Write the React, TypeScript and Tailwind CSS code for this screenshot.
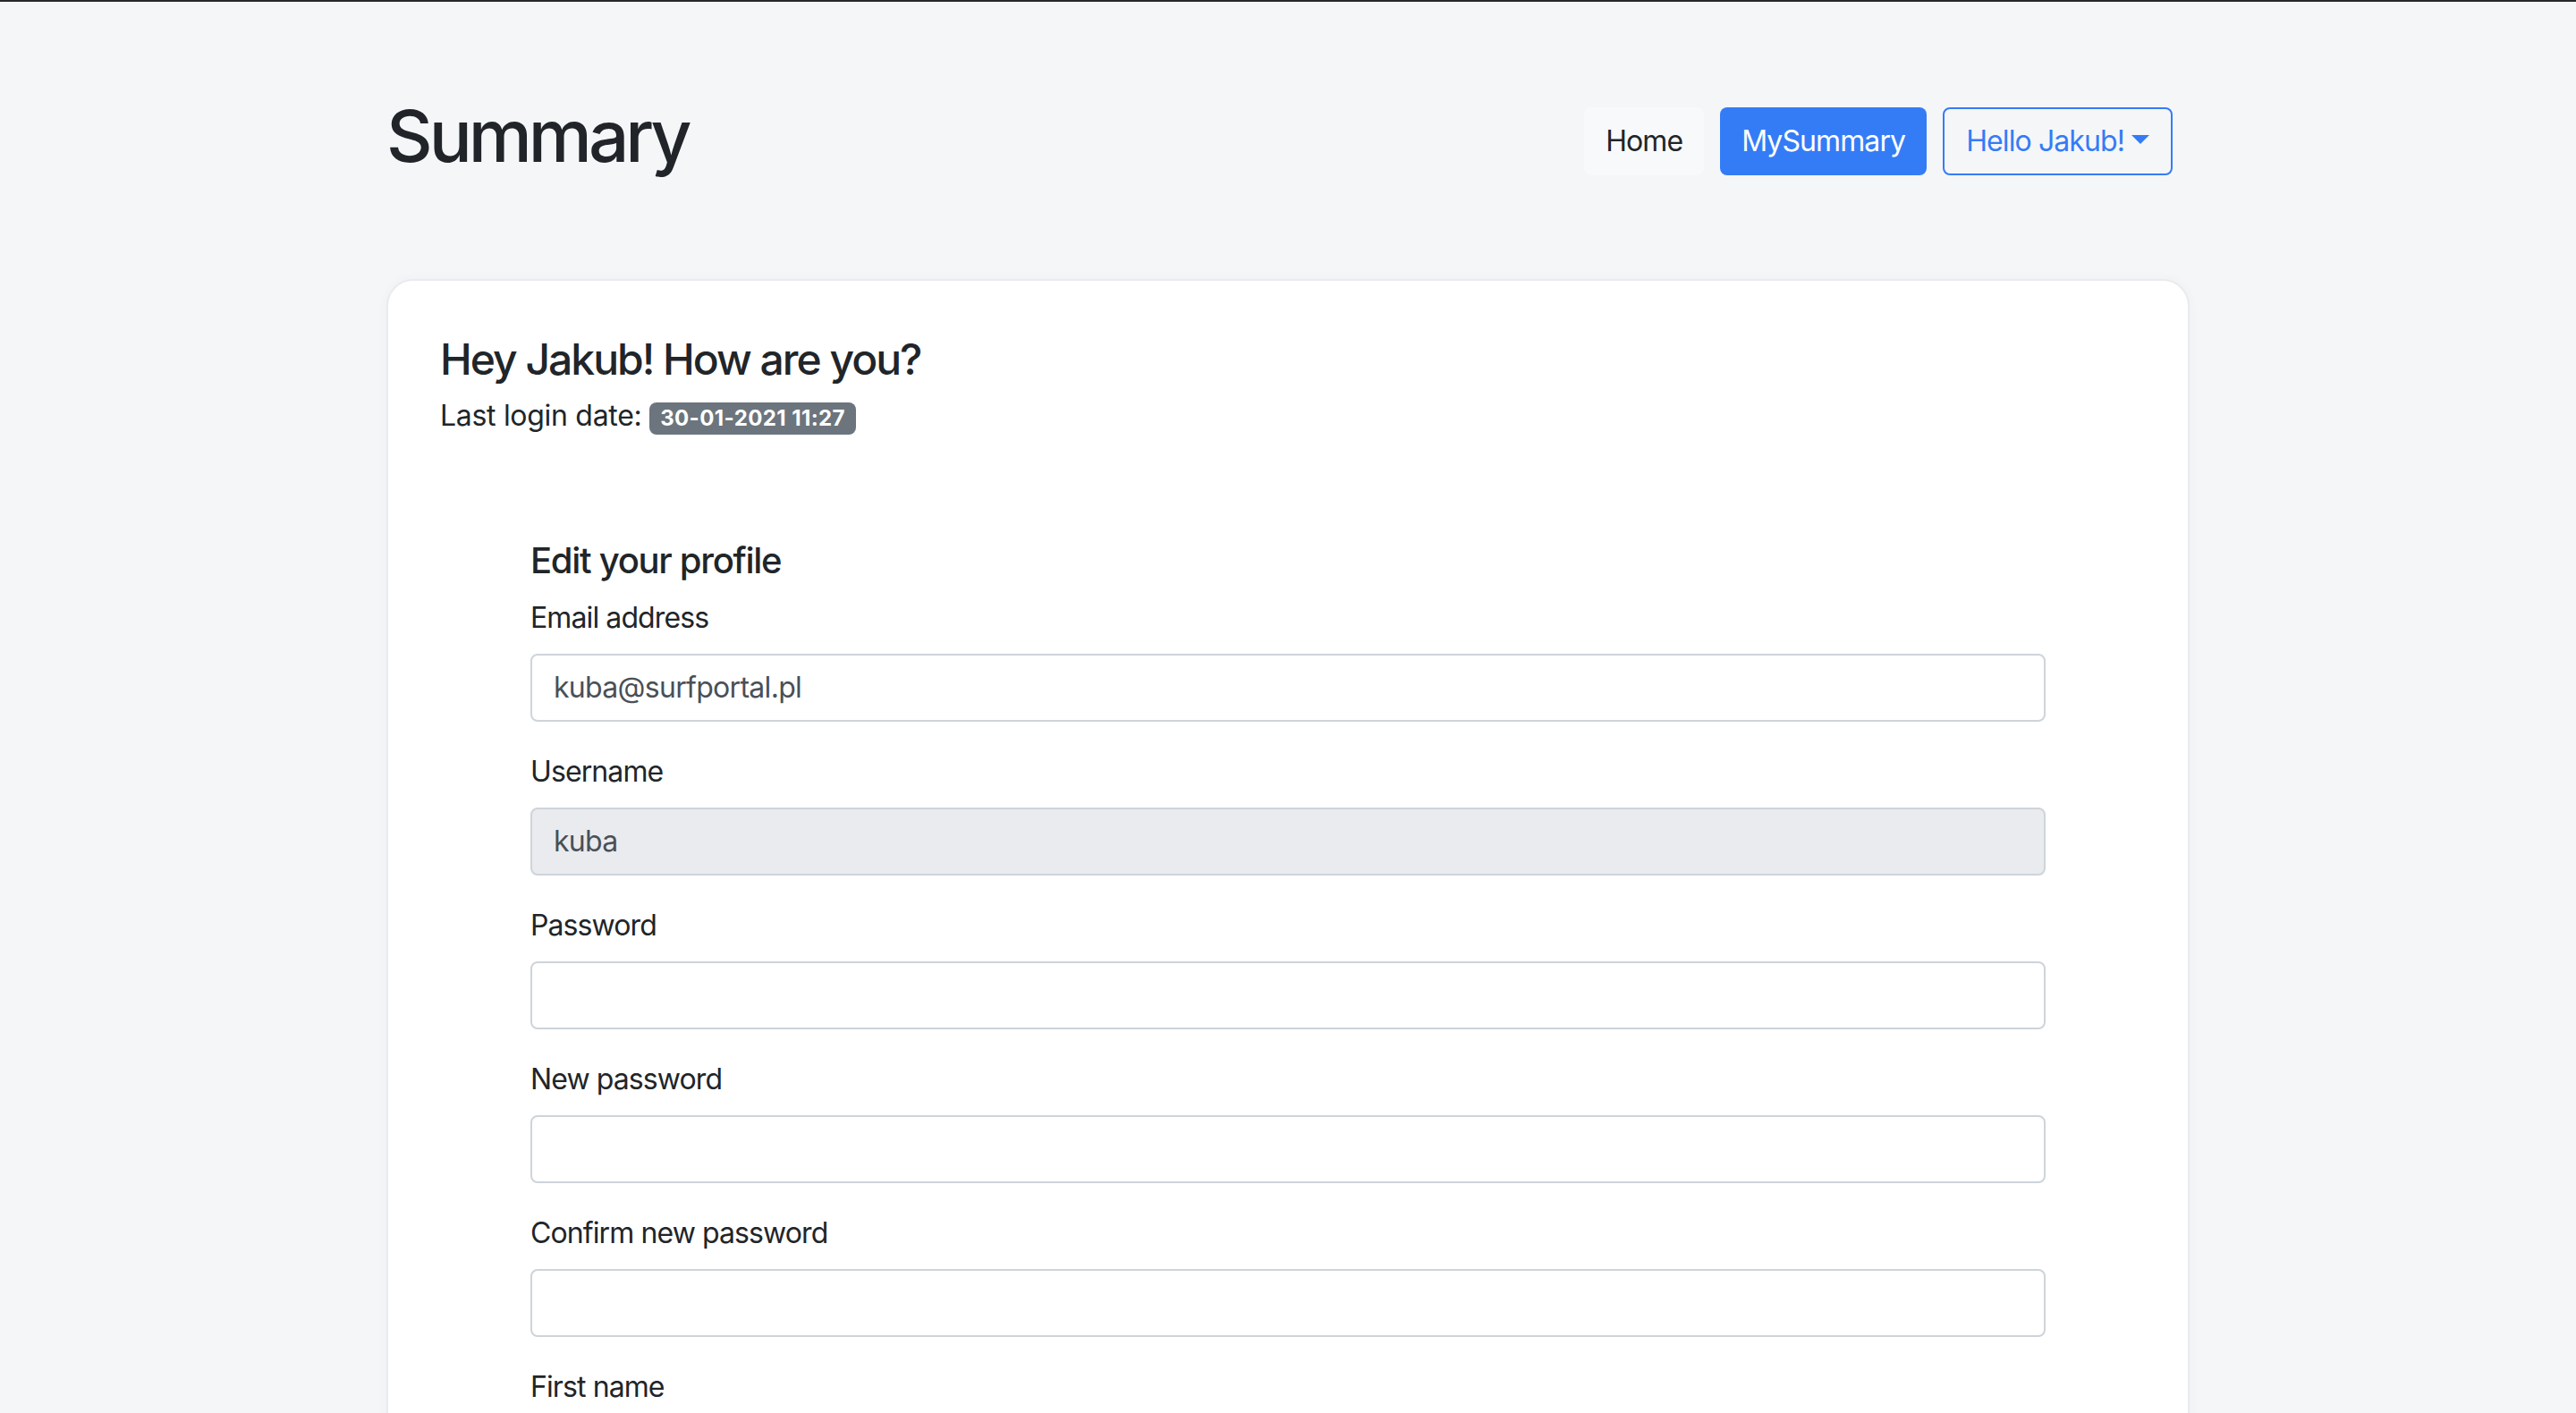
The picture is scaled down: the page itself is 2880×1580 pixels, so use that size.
import React from "react";

const font = { fontFamily: "Inter, 'Noto Sans', 'Liberation Sans', sans-serif" };

function Field({ label, value, disabled }: { label: string; value?: string; disabled?: boolean }) {
  return (
    <div className="mb-[32px]">
      <label className="block text-[32px] leading-[48px] mb-[16px] text-[#212529] tracking-[-0.9px]">{label}</label>
      <div
        className={
          "h-[76px] border-2 border-[#ced4da] rounded-[8px] px-[24px] flex items-center text-[32px] text-[#495057] tracking-[-0.7px] " +
          (disabled ? "bg-[#e9ebee]" : "bg-white")
        }
      >
        {value}
      </div>
    </div>
  );
}

export default function App() {
  return (
    <div className="h-screen overflow-hidden bg-[#f5f6f8] border-t-2 border-[#26282b]" style={font}>
      <div className="w-[2016px] mx-auto">
        <header className="flex justify-between items-start pt-[102px]">
          <h1 className="text-[80px] leading-[96px] font-medium text-[#212529] tracking-[-4px]">Summary</h1>
          <nav className="flex items-center gap-[18px] mt-[16px] mr-[19px] tracking-[-0.9px]">
            <button className="h-[76px] px-[24px] rounded-[8px] bg-[#f8f9fa] text-[32px] text-[#212529]">Home</button>
            <button className="h-[76px] px-[24px] rounded-[8px] bg-[#347cf6] text-[32px] text-white">MySummary</button>
            <button className="h-[76px] px-[24px] rounded-[8px] border-2 border-[#347cf6] text-[32px] text-[#347cf6] flex items-center">
              Hello Jakub!
              <span className="ml-[8px] mb-[4px] w-0 h-0 border-t-[10px] border-t-[#347cf6] border-x-[10px] border-x-transparent" />
            </button>
          </nav>
        </header>

        <main className="mt-[112px] bg-white border-2 border-[#eaebee] rounded-[30px] shadow-[0_0_14px_rgba(0,0,0,0.03)] pt-[59px] pl-[58px] pr-[58px] pb-[80px]">
          <h4 className="text-[48px] leading-[57.6px] font-medium text-[#212529] tracking-[-2px]">Hey Jakub! How are you?</h4>
          <p className="text-[32px] leading-[48px] mt-[10px] text-[#212529] tracking-[-0.3px]">
            Last login date:{" "}
            <span className="inline-block text-[24px] leading-none font-bold text-white bg-[#6c757d] rounded-[8px] px-[12px] py-[6px] tracking-[0.4px]">
              30-01-2021 11:27
            </span>
          </p>

          <form className="w-[1694px] mx-auto mt-[114px]" onSubmit={(e) => e.preventDefault()}>
            <h5 className="text-[40px] leading-[48px] font-medium text-[#212529] mb-[16px] tracking-[-1.3px]">Edit your profile</h5>
            <Field label="Email address" value="kuba@surfportal.pl" />
            <Field label="Username" value="kuba" disabled />
            <Field label="Password" />
            <Field label="New password" />
            <Field label="Confirm new password" />
            <Field label="First name" />
            <Field label="Last name" />
          </form>
        </main>
      </div>
    </div>
  );
}
